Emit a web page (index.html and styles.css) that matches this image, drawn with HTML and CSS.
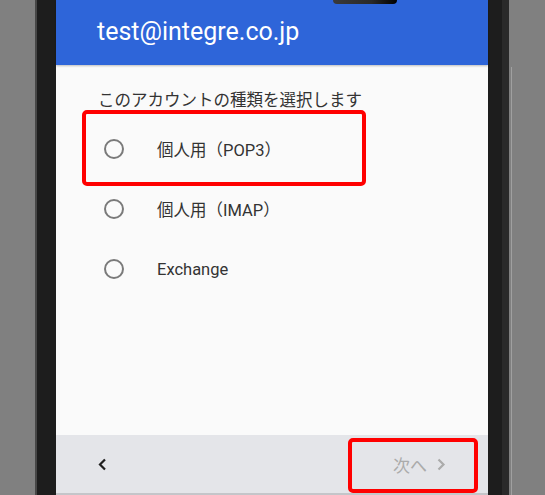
FILE: index.html
```html
<!DOCTYPE html>
<html lang="ja">
<head>
    <meta charset="UTF-8">
    <meta name="viewport" content="width=device-width, initial-scale=1.0">
    <title>アカウントの種類</title>
    <link rel="stylesheet" href="styles.css">
</head>
<body>
    <div class="device">
        <div class="screen">
            <header class="appbar">
                <div class="hero-phone"></div>
                <h1>test@integre.co.jp</h1>
            </header>

            <main class="content">
                <p class="prompt">このアカウントの種類を選択します</p>
                <ul class="options">
                    <li class="option marked">
                        <span class="radio"></span>
                        <span class="label">個人用（POP3）</span>
                    </li>
                    <li class="option">
                        <span class="radio"></span>
                        <span class="label">個人用（IMAP）</span>
                    </li>
                    <li class="option">
                        <span class="radio"></span>
                        <span class="label">Exchange</span>
                    </li>
                </ul>
            </main>

            <footer class="navbar">
                <button class="nav-back" aria-label="戻る">
                    <svg width="9" height="13" viewBox="0 0 9 13"><path d="M7 1.5 L2 6.5 L7 11.5" fill="none" stroke="currentColor" stroke-width="2.2"/></svg>
                </button>
                <button class="nav-next marked" disabled>
                    次へ
                    <svg width="10" height="13" viewBox="0 0 10 13"><path d="M2.5 1.5 L7.5 6.5 L2.5 11.5" fill="none" stroke="currentColor" stroke-width="2.2"/></svg>
                </button>
            </footer>
        </div>
    </div>
</body>
</html>
```

FILE: styles.css
```css
html, body {
    margin: 0;
    height: 100%;
}
body {
    background-color: #808080;
    font-family: Roboto, "Noto Sans CJK JP", sans-serif;
    overflow: hidden;
}
.device {
    position: relative;
    box-sizing: border-box;
    width: 474px;
    height: 495px;
    margin-left: 35px;
    padding: 0 14px 0 19px;
    background-color: #1d1d1d;
    border-left: 2px solid #474747;
    border-right: 7px solid #2a2a2a;
}
.device::after {
    content: "";
    position: absolute;
    right: -10px;
    top: 67px;
    bottom: 0;
    width: 1px;
    background-color: #a0a0a0;
}
.screen {
    display: flex;
    flex-direction: column;
    width: 432px;
    height: 100%;
    background-color: #fafafa;
}
.appbar {
    position: relative;
    flex: 0 0 65px;
    display: flex;
    align-items: center;
    padding-left: 41px;
    background-color: #2e65d9;
    box-shadow: 0 1px 2px rgba(0, 0, 0, 0.25);
    z-index: 1;
}
.appbar h1 {
    margin: 0 0 2px;
    color: #fff;
    font-size: 25px;
    font-weight: 400;
}
.hero-phone {
    position: absolute;
    left: 277px;
    top: 0;
    width: 64px;
    height: 4px;
    border-radius: 0 0 4px 4px;
    background: linear-gradient(to right, #3a3a3a, #2a2a2a 60%, #000);
    box-shadow: 0 8px 4px -3px rgba(0, 0, 40, 0.35);
}
.content {
    flex: 1;
    padding: 24px 0 0 42px;
}
.prompt {
    margin: 0;
    font-size: 16.5px;
    line-height: 24px;
    color: #333;
}
.options {
    list-style: none;
    margin: 6px 0 0;
    padding: 0;
}
.option {
    position: relative;
    display: flex;
    align-items: center;
    height: 60px;
    font-size: 16.5px;
    color: #333;
}
.radio {
    box-sizing: border-box;
    width: 20px;
    height: 20px;
    margin: 0 33px 0 6px;
    border: 2px solid #7a7a7a;
    border-radius: 50%;
}
.option.marked::after {
    content: "";
    position: absolute;
    left: -16px;
    top: -9px;
    width: 284px;
    height: 76px;
    box-sizing: border-box;
    border: 4px solid #ff0000;
    border-radius: 5px;
}
.navbar {
    flex: 0 0 58px;
    display: flex;
    align-items: center;
    justify-content: space-between;
    background-color: #e4e5e9;
    border-bottom: 2px solid #c4c5c9;
}
.navbar button {
    display: flex;
    align-items: center;
    border: none;
    background: none;
    font-family: inherit;
    padding: 0;
}
.nav-back {
    margin-left: 42px;
    color: #1f1f1f;
}
.nav-next {
    position: relative;
    gap: 9px;
    margin-right: 42px;
    font-size: 17px;
    color: #ababab;
}
.nav-next.marked::after {
    content: "";
    position: absolute;
    left: -45px;
    right: -32px;
    top: -14px;
    height: 55px;
    box-sizing: border-box;
    border: 4px solid #ff0000;
    border-radius: 5px;
}
```
